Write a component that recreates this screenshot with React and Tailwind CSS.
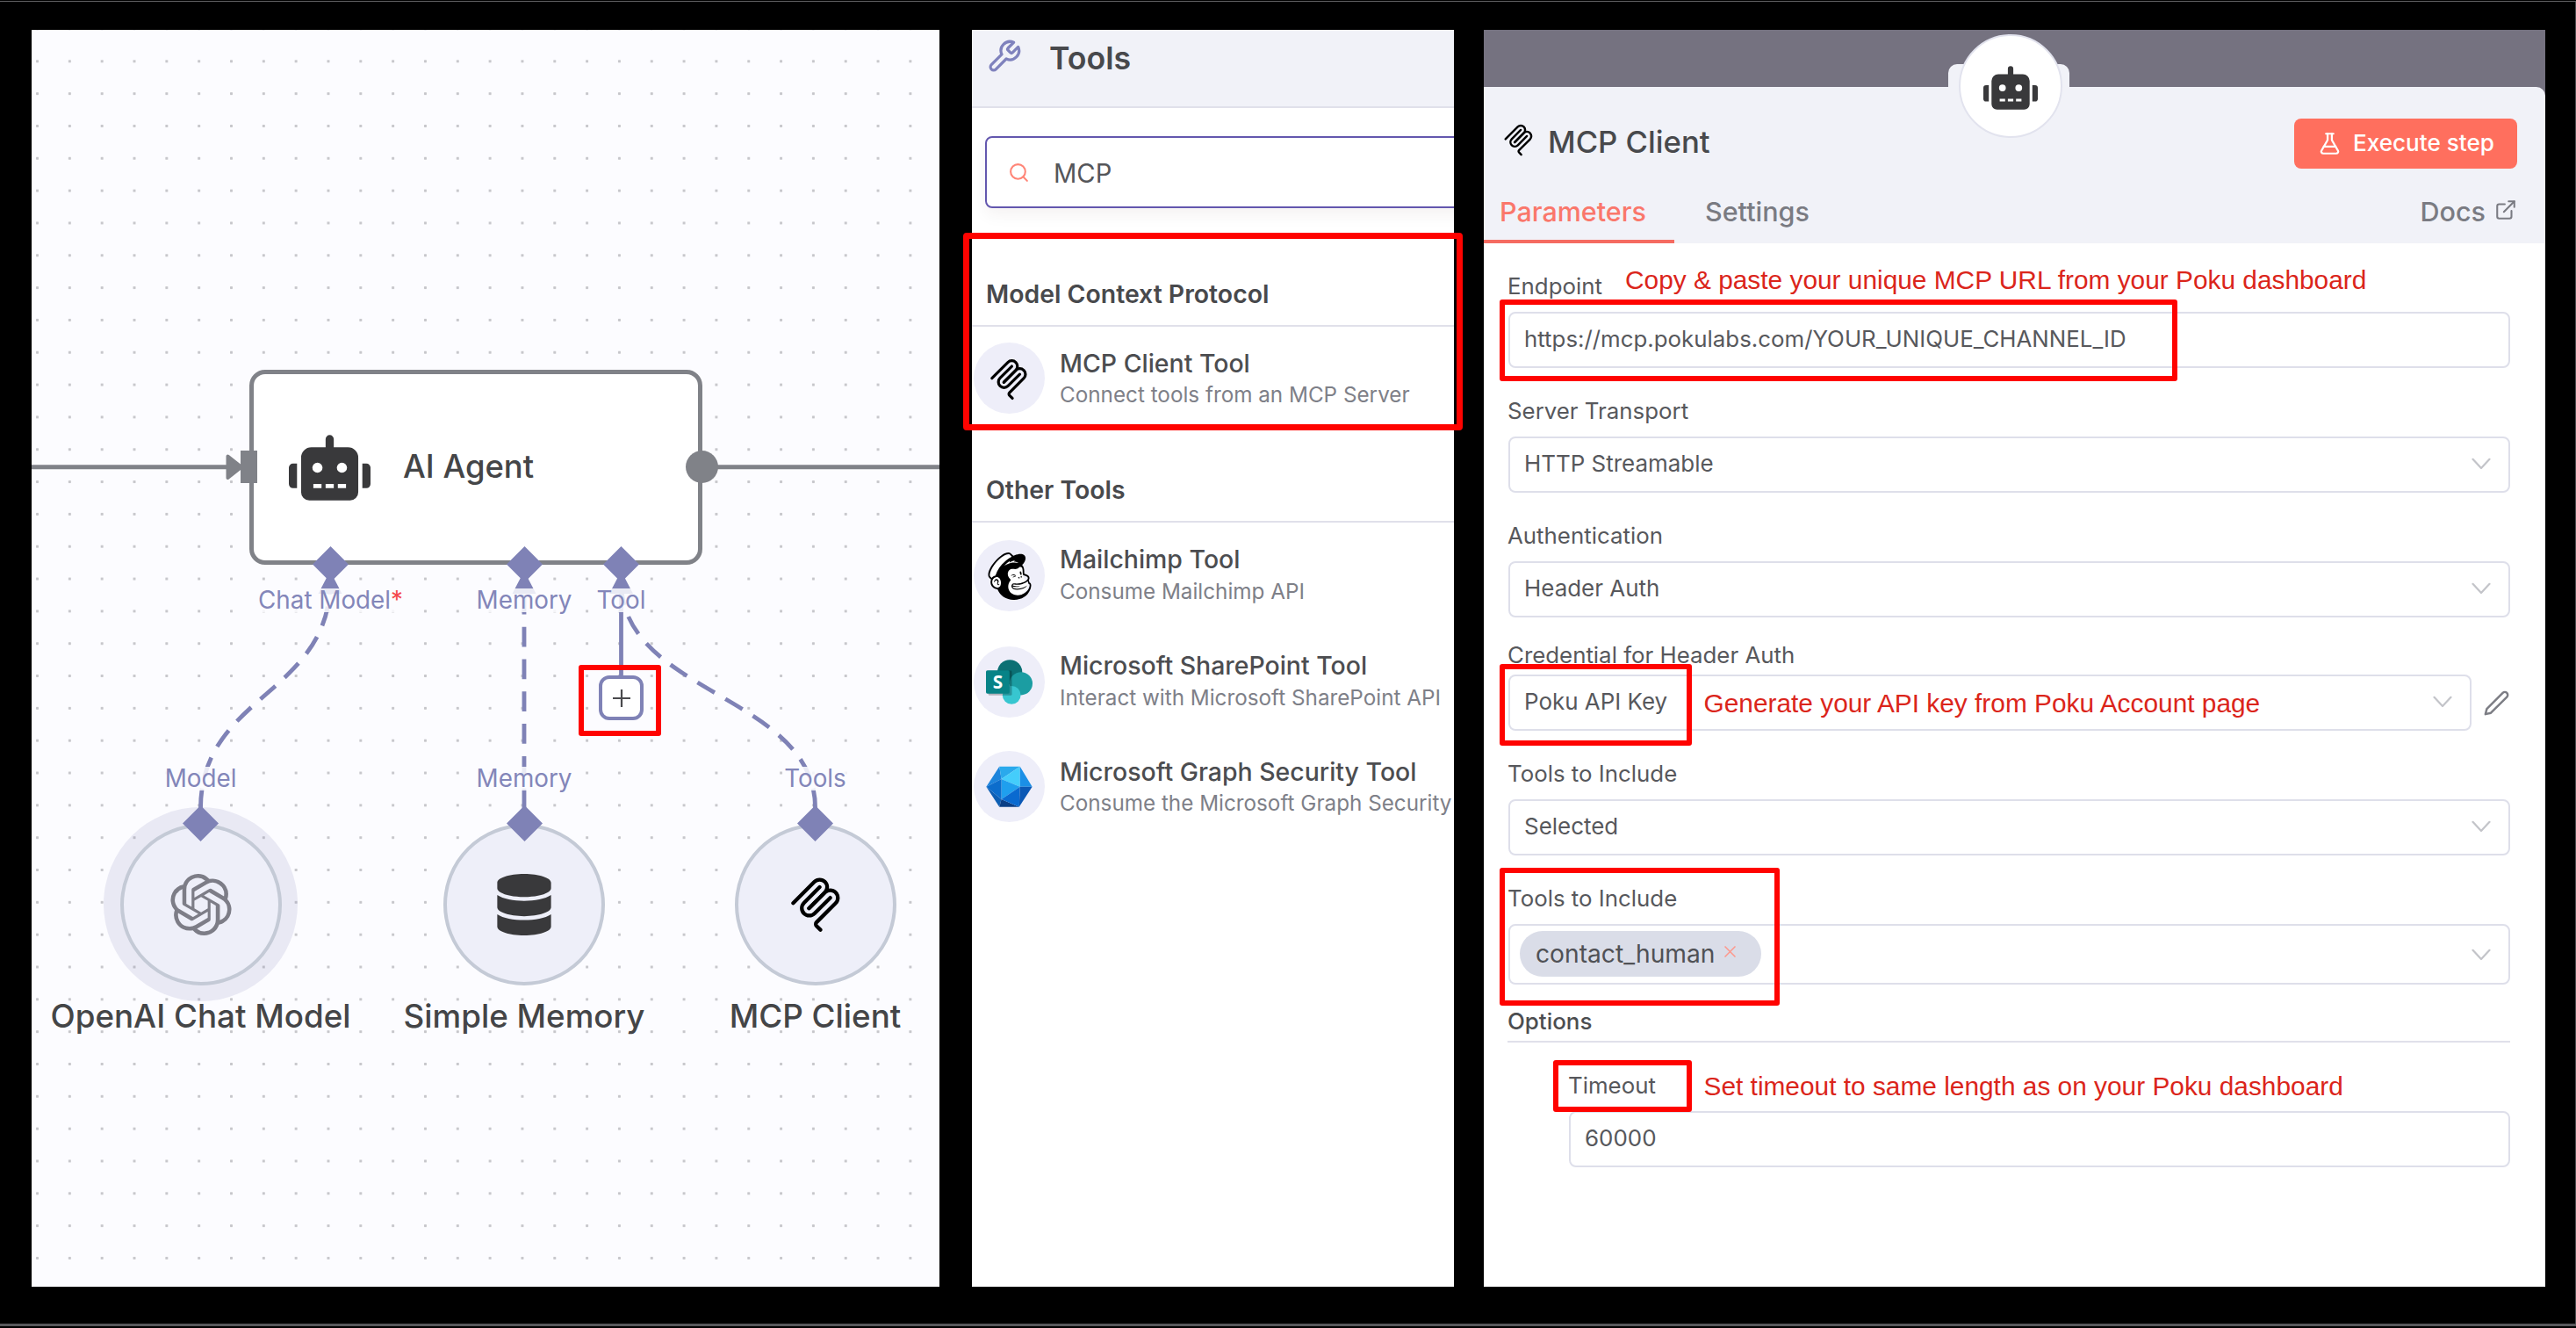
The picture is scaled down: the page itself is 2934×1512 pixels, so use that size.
import React from "react";
import { FaRobot, FaDatabase } from "react-icons/fa";
import { SiOpenai, SiMailchimp } from "react-icons/si";
import { ExternalLink, FlaskConical, Search } from "lucide-react";

/* ---------- shared icons ---------- */

function McpIcon({ className }) {
  return (
    <svg viewBox="0 0 180 180" fill="none" stroke="#000" strokeWidth="12" strokeLinecap="round" className={className}>
      <path d="M18 84.8528L85.8822 16.9706C95.2548 7.59798 110.451 7.59798 119.823 16.9706C129.196 26.3431 129.196 41.5391 119.823 50.9117L68.5581 102.177" />
      <path d="M69.2652 101.47L119.823 50.9117C129.196 41.5391 144.392 41.5391 153.765 50.9117L154.118 51.2652C163.491 60.6378 163.491 75.8338 154.118 85.2063L92.7248 146.6C89.6006 149.724 89.6006 154.789 92.7248 157.913L105.331 170.52" />
      <path d="M102.853 33.9411L52.6482 84.1457C43.2756 93.5183 43.2756 108.714 52.6482 118.087C62.0208 127.459 77.2167 127.459 86.5893 118.087L136.794 67.8822" />
    </svg>
  );
}

function WrenchIcon({ className }) {
  return (
    <svg viewBox="0 0 24 24" fill="none" stroke="currentColor" strokeWidth="1.9" strokeLinecap="round" strokeLinejoin="round" className={className}>
      <path d="M14.7 6.3a1 1 0 0 0 0 1.4l1.6 1.6a1 1 0 0 0 1.4 0l3.77-3.77a6 6 0 0 1-7.94 7.94l-6.91 6.91a2.12 2.12 0 0 1-3-3l6.91-6.91a6 6 0 0 1 7.94-7.94l-3.76 3.76z" />
    </svg>
  );
}

function PencilIcon({ className }) {
  return (
    <svg viewBox="0 0 24 24" fill="none" stroke="currentColor" strokeWidth="1.9" strokeLinecap="round" strokeLinejoin="round" className={className}>
      <path d="M17.5 3a2.5 2.5 0 1 1 3.6 3.6L7 20.7 2.2 21.8l1.2-4.7Z" />
    </svg>
  );
}

function ChevronIcon() {
  return (
    <svg viewBox="0 0 22 14" className="h-3.5 w-[22px]" fill="none" stroke="#c3c4c9" strokeWidth="2.2" strokeLinecap="round" strokeLinejoin="round">
      <path d="M1.5 1.8L11 12L20.5 1.8" />
    </svg>
  );
}

function MailchimpIcon() {
  return (
    <div className="relative h-[54px] w-[52px]">
      <svg viewBox="0 0 24 24" className="absolute inset-0 h-full w-full" preserveAspectRatio="none">
        <path d="M1.4 11L4.5 5L9 1.5L15 1.5L18.5 5L19 12L22 17L18.5 22L11 22L6 18L2 16Z" fill="#fff" />
      </svg>
      <SiMailchimp className="absolute inset-0 h-full w-full text-black" preserveAspectRatio="none" />
    </div>
  );
}

function SharePointIcon() {
  return (
    <svg viewBox="0 0 158 151" className="h-[51px] w-[53px]">
      <circle cx="81" cy="42" r="42" fill="#0b7074" />
      <circle cx="119" cy="81" r="39" fill="#1b9da2" />
      <circle cx="87" cy="120" r="31" fill="#37c6d0" />
      <rect x="8" y="37" width="80" height="84" rx="4" fill="#000" opacity="0.25" />
      <rect x="0" y="36" width="80" height="79" rx="5" fill="#078387" />
      <text x="40" y="97" textAnchor="middle" fontFamily="Open Sans, sans-serif" fontWeight="700" fontSize="62" fill="#fff">S</text>
    </svg>
  );
}

function GraphSecurityIcon() {
  return (
    <svg viewBox="0 0 158 142" className="h-[47px] w-[53px]">
      <path d="M0 72L45 2L52 45Z" fill="#1c84dc" />
      <path d="M45 2H116L52 45Z" fill="#2aa9ec" />
      <path d="M116 2V72L52 45Z" fill="#44cdfb" />
      <path d="M116 2L158 72H116Z" fill="#1b8fe6" />
      <path d="M52 45L116 72L52 115Z" fill="#1f9fee" />
      <path d="M0 72L52 45V115Z" fill="#0c6dcc" />
      <path d="M0 72L52 115L45 141Z" fill="#0e5fb4" />
      <path d="M52 115L45 141H113Z" fill="#0b3f86" />
      <path d="M52 115L116 72L113 141Z" fill="#0a6ad0" />
      <path d="M116 72H158L113 141Z" fill="#0b58b5" />
    </svg>
  );
}

/* ---------- workflow canvas ---------- */

const DASH = "22.7 14.1";

function Wires() {
  return (
    <svg viewBox="36 34 1034 1431" className="absolute inset-0 h-full w-full" fill="none">
      <g stroke="#808288" strokeWidth="5">
        <path d="M36 531.8H262" />
        <path d="M800 531.8H1070" />
      </g>
      <path d="M259.5 519.5L275 531.8L259.5 544Z" fill="#808288" stroke="#808288" strokeWidth="4" strokeLinejoin="round" />
      <g stroke="#7f82b6" strokeWidth="4.8">
        <path d="M228.5 920.4C228.5 791 376 791 376 662" strokeDasharray={DASH} />
        <path d="M597 920.4V662" strokeDasharray={DASH} />
        <path d="M928.6 920.4C928.6 791 707.5 791 707.5 662" strokeDasharray={DASH} />
        <path d="M707.5 662V770" />
      </g>
      <g fill="#7f82b6">
        <path d="M376 650L389.5 676H362.5Z" />
        <path d="M597 650L610.5 676H583.5Z" />
        <path d="M707.5 650L721 676H694Z" />
      </g>
    </svg>
  );
}

function Diamond({ className }) {
  return <div className={"absolute size-[29px] rotate-45 bg-[#7f82b6] " + className} />;
}

function PortLabel({ className, children }) {
  return (
    <div className={"absolute flex h-[27px] -translate-x-1/2 justify-center whitespace-nowrap bg-[#fcfcff]/85 px-px text-[27.8px] leading-[27px] text-[#8386b9] " + className}>
      {children}
    </div>
  );
}

function SubNode({ className, label, children }) {
  return (
    <div className={"absolute top-[904px] flex w-[400px] -translate-x-1/2 flex-col items-center " + className}>
      <div className="relative flex size-[184px] items-center justify-center rounded-full border-4 border-[#c4cad6] bg-[#eeeff9]">
        {children}
        <Diamond className="-top-[19px] left-[73.5px]" />
      </div>
      <div className="mt-[13px] whitespace-nowrap text-[36.75px] font-medium leading-[44px] text-[#444547]">{label}</div>
    </div>
  );
}

function Canvas() {
  return (
    <section className="relative h-[1431px] w-[1034px] shrink-0 overflow-hidden bg-[#fcfcff] bg-[radial-gradient(circle,#c6c6ca_1.3px,transparent_2px)] bg-[length:36.84px_36.83px] bg-[position:-11.9px_17.4px]">
      <div className="absolute left-[82px] top-[885px] size-[221px] rounded-full bg-[#7f82b6]/15" />
      <Wires />

      <div className="absolute left-[248px] top-[387px] flex h-[222px] w-[516px] items-center gap-[37px] rounded-[18px] border-[5px] border-[#808288] bg-white pl-[40px]">
        <FaRobot className="h-[75px] w-[93px] text-[#39393b]" />
        <span className="-mt-[2px] text-[36.4px] font-medium leading-[44px] text-[#444547]">AI Agent</span>
      </div>
      <div className="absolute left-[238px] top-[479px] h-[37px] w-[19px] bg-[#808288]" />
      <div className="absolute left-[745px] top-[479px] size-[37px] rounded-full bg-[#808288]" />

      <Diamond className="left-[325.5px] top-[594px]" />
      <Diamond className="left-[546.5px] top-[594px]" />
      <Diamond className="left-[657px] top-[594px]" />

      <PortLabel className="left-[340.5px] top-[636px]">
        Chat Model<span className="text-[#f4484c]">*</span>
      </PortLabel>
      <PortLabel className="left-[561px] top-[636px]">Memory</PortLabel>
      <PortLabel className="left-[671.5px] top-[636px]">Tool</PortLabel>

      <SubNode className="left-[192.5px]" label="OpenAI Chat Model">
        <SiOpenai className="size-[70px] text-[#7d7d87]" />
      </SubNode>
      <SubNode className="left-[561px]" label="Simple Memory">
        <FaDatabase className="h-[70px] w-[62px] text-[#39393b]" />
      </SubNode>
      <SubNode className="left-[892.5px]" label="MCP Client">
        <McpIcon className="size-16" />
      </SubNode>

      <PortLabel className="left-[192.5px] top-[839px]">Model</PortLabel>
      <PortLabel className="left-[561px] top-[839px]">Memory</PortLabel>
      <PortLabel className="left-[892.5px] top-[839px]">Tools</PortLabel>

      <div className="absolute left-[646px] top-[735px] flex h-[51px] w-[51px] items-center justify-center rounded-xl border-[4.5px] border-[#7f82b6] bg-white">
        <svg viewBox="0 0 20 20" className="size-5" stroke="#4a4a4d" strokeWidth="2.2">
          <path d="M10 0V20M0 10H20" />
        </svg>
      </div>
      <Highlight className="left-[623px] top-[723px] h-[81px] w-[94px]" />
    </section>
  );
}

function Highlight({ className }) {
  return <div className={"pointer-events-none absolute rounded-[3px] border-[6px] border-[#ff0300] " + className} />;
}

/* ---------- tools list ---------- */

function SectionTitle({ className, children }) {
  return (
    <h3 className={"border-b-2 border-[#e0e0ea] pb-[17px] pl-4 text-[28.4px] font-semibold leading-9 text-[#48494c] " + className}>
      {children}
    </h3>
  );
}

function ToolRow({ className, textClass, icon, title, subtitle }) {
  return (
    <div className={"flex h-[81px] gap-[17px] pl-0.5 " + className}>
      <div className="flex size-[81px] shrink-0 items-center justify-center rounded-full bg-[#eeeef9]">{icon}</div>
      <div className={"flex flex-col whitespace-nowrap " + textClass}>
        <div className="text-[28.45px] font-medium leading-9 text-[#4c4d50]">{title}</div>
        <div className="text-[24.25px] leading-[30px] text-[#7e8088]">{subtitle}</div>
      </div>
    </div>
  );
}

function ToolsPanel() {
  return (
    <section className="relative ml-[37px] h-[1431px] w-[549px] shrink-0 bg-white">
      <div className="h-full overflow-hidden">
        <header className="flex h-[89px] items-start gap-[31px] border-b-2 border-[#e0e0ea] bg-[#f1f2f8] pl-4 pt-[10px]">
          <WrenchIcon className="size-[41px] text-[#7f82bd]" />
          <h2 className="text-[35.7px] font-semibold leading-[44px] text-[#48494c]">Tools</h2>
        </header>
        <div className="ml-[15px] mt-8 flex h-[82px] w-[600px] items-center gap-[27px] rounded-lg border-2 border-[#6357ae] pl-6 shadow-[0_8px_18px_rgba(68,28,23,0.05)]">
          <Search className="size-[25px] text-[#ff8577]" strokeWidth={2} />
          <span className="pt-[3px] text-[29.2px] leading-9 text-[#55565a]">MCP</span>
        </div>

        <SectionTitle className="mt-20">Model Context Protocol</SectionTitle>
        <ToolRow className="mt-[18px]" textClass="gap-[3px] pt-[6px]" icon={<McpIcon className="mr-[2px] mt-[2px] size-12" />} title="MCP Client Tool" subtitle="Connect tools from an MCP Server" />

        <SectionTitle className="mt-[69px]">Other Tools</SectionTitle>
        <ToolRow className="mt-5" textClass="gap-1 pt-1" icon={<MailchimpIcon />} title="Mailchimp Tool" subtitle="Consume Mailchimp API" />
        <ToolRow className="mt-10" textClass="gap-1 pt-1" icon={<SharePointIcon />} title="Microsoft SharePoint Tool" subtitle="Interact with Microsoft SharePoint API" />
        <ToolRow className="mt-[38px]" textClass="gap-[3px] pt-[6px]" icon={<GraphSecurityIcon />} title="Microsoft Graph Security Tool" subtitle="Consume the Microsoft Graph Security" />
      </div>
      <div className="pointer-events-none absolute -left-[10px] top-[231px] h-[225px] w-[569px] rounded-[4px] border-[7px] border-[#ff0300]" />
    </section>
  );
}

/* ---------- node settings ---------- */

function Label({ className = "", children }) {
  return <div className={"-ml-px h-8 whitespace-nowrap text-[25.85px] leading-8 text-[#57585c] " + className}>{children}</div>;
}

function Field({ className = "", select, children }) {
  return (
    <div className={"flex h-16 items-center justify-between rounded-lg border-2 border-[#dedfea] bg-white pb-[2px] pl-4 pr-5 text-[25.95px] text-[#57585c] " + className}>
      <span className="whitespace-nowrap leading-8">{children}</span>
      {select && <ChevronIcon />}
    </div>
  );
}

function Note({ className, children }) {
  return <div className={"absolute whitespace-nowrap font-['Liberation_Sans'] text-[29.85px] leading-9 text-[#db251b] " + className}>{children}</div>;
}

function SettingsPanel() {
  return (
    <section className="relative ml-[34px] h-[1431px] w-[1209px] shrink-0 bg-white">
      <div className="h-[80px] bg-[#757280]" />
      <header className="-mt-[15px] flex h-[178px] flex-col rounded-tr-[10px] bg-[#f1f2f8] pt-9">
        <div className="flex h-14 items-center justify-between pl-[21px] pr-8">
          <div className="flex items-center gap-[15px]">
            <McpIcon className="-mt-[7px] size-[37px]" />
            <h2 className="-mt-[4px] text-[34.7px] font-medium leading-10 text-[#48494c]">MCP Client</h2>
          </div>
          <button className="flex h-[57px] w-[254px] items-center gap-3 rounded-lg bg-[#ff6f5e] pl-[26px] text-[26.1px] font-medium text-white">
            <FlaskConical className="h-[27px] w-[29px]" strokeWidth={1.9} preserveAspectRatio="none" />
            <span className="whitespace-nowrap">Execute step</span>
          </button>
        </div>
        <nav className="mt-[30px] flex flex-1 items-start text-[30.5px] font-medium leading-10 text-[#7a7b82]">
          <div className="h-full w-[217px] border-b-4 border-[#f56b61] pl-[18px] text-[#fa776b]">Parameters</div>
          <div className="pl-[35px]">Settings</div>
          <div className="ml-auto flex items-center gap-[10px] pr-8">
            Docs
            <ExternalLink className="-mt-[4px] size-[26px]" strokeWidth={1.9} />
          </div>
        </nav>
      </header>
      <div className="absolute left-[529px] top-[39px] h-[34px] w-[138px] rounded-t-[10px] bg-[#f1f2f8]" />
      <div className="absolute left-[541px] top-[5px] flex size-[118px] items-center justify-center rounded-full border-2 border-[#e2e3ee] bg-white">
        <FaRobot className="mt-[3px] h-[50px] w-[62px] text-[#39393b]" />
      </div>

      <div className="flex flex-col pl-7 pr-[40.5px]">
        <Label className="mt-[33px]">Endpoint</Label>
        <Field className="mt-[13px]">
          <span className="text-[25.85px]">https://mcp.pokulabs.com/YOUR_UNIQUE_CHANNEL_ID</span>
        </Field>

        <Label className="mt-[33px]">Server Transport</Label>
        <Field className="mt-[13px]" select>HTTP Streamable</Field>

        <Label className="mt-[33px]">Authentication</Label>
        <Field className="mt-[13px]" select>Header Auth</Field>

        <Label className="mt-[27px]">Credential for Header Auth</Label>
        <div className="mt-[6px] flex items-center justify-between">
          <Field className="w-[1097px]" select>Poku API Key</Field>
          <PencilIcon className="size-[31px] text-[#7c7d84]" />
        </div>

        <Label className="mt-[33px]">Tools to Include</Label>
        <Field className="mt-[13px]" select>Selected</Field>

        <Label className="mt-[33px]">Tools to Include</Label>
        <div className="mt-[13px] flex h-[69px] items-center justify-between rounded-lg border-2 border-[#dedfea] pl-[11px] pr-5">
          <div className="-mt-px flex h-[52px] w-[275px] items-center gap-[11px] rounded-full bg-[#dadde8] pl-[18px]">
            <span className="-mt-px text-[28.2px] leading-8 text-[#505155]">contact_human</span>
            <svg viewBox="0 0 13 13" className="-mt-[5px] size-[13px]" stroke="#fd988c" strokeWidth="1.5">
              <path d="M0.5 0.5L12.5 12.5M12.5 0.5L0.5 12.5" />
            </svg>
          </div>
          <ChevronIcon />
        </div>

        <div className="-ml-px mt-[26px] border-b-2 border-[#e0e0ea] pb-[6px] text-[25.9px] font-medium leading-8 text-[#4c4d50]">Options</div>

        <div className="flex flex-col pl-[69px]">
          <Label className="mt-[33px]">Timeout</Label>
          <Field className="mt-[13px]">60000</Field>
        </div>
      </div>

      <Note className="left-[161px] top-[267px]">Copy &amp; paste your unique MCP URL from your Poku dashboard</Note>
      <Note className="left-[250.5px] top-[749px]">Generate your API key from Poku Account page</Note>
      <Note className="left-[250.5px] top-[1185px]">Set timeout to same length as on your Poku dashboard</Note>

      <Highlight className="left-[18px] top-[307px] h-[93px] w-[772px]" />
      <Highlight className="left-[18px] top-[722px] h-[93px] w-[219px]" />
      <Highlight className="left-[18px] top-[954px] h-[157px] w-[319px]" />
      <Highlight className="left-[79px] top-[1173px] h-[59px] w-[158px]" />
    </section>
  );
}

export default function App() {
  return (
    <main className="flex h-[1512px] w-[2934px] flex-col overflow-hidden bg-black font-[Inter,sans-serif]">
      <div className="mt-px h-px shrink-0 bg-[#606062]" />
      <div className="flex h-[1505px] shrink-0 border-r border-[#4a4a4c] pl-9 pt-8">
        <Canvas />
        <ToolsPanel />
        <SettingsPanel />
      </div>
      <div className="h-[3px] shrink-0 bg-[#58585b]" />
    </main>
  );
}
